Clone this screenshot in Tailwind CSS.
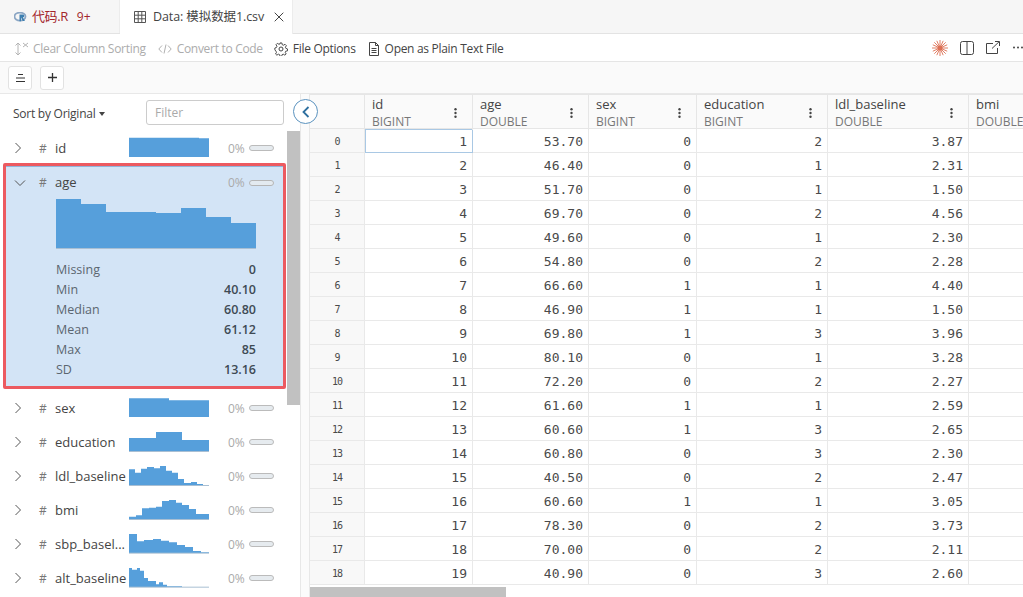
<!DOCTYPE html>
<html><head><meta charset="utf-8"><script src="https://cdn.jsdelivr.net/npm/@tailwindcss/browser@4"></script></head>
<body class="w-[1023px] h-[597px] overflow-hidden bg-white font-['Open_Sans','Noto_Sans_CJK_SC',sans-serif] text-[12px] text-[#444]">
<div class="h-[34px] flex bg-[#f6f6f6] border-b border-[#e3e3e3]">
  <div class="w-[120px] h-[33px] flex items-center pl-[14px] border-r border-[#ececec]">
    <svg width="13" height="10" viewBox="0 0 13 10" class="mr-[5px]"><ellipse cx="6" cy="4.6" rx="5.5" ry="4" fill="none" stroke="#8ba6c4" stroke-width="1.8"/><path d="M5.5 2.6h3.4a1.3 1.3 0 0 1 0 2.8l2 3.6H8.8L7 5.600v3.600H5.500z" fill="#3d7fb0"/></svg>
    <span class="text-[13px] text-[#a3262c] tracking-[-0.4px]">代码.R</span><span class="ml-[9px] text-[12px] text-[#a3262c]">9+</span>
  </div>
  <div class="w-[173px] h-[34px] bg-white flex items-center pl-[14px] text-[#444] border-r border-[#ececec]">
    <svg width="12" height="12" viewBox="0 0 12 12" fill="none" stroke="#555" class="mr-[7px]"><path d="M.5.5h11v11H.5zM.5 4.2h11M.5 7.8h11M4.2.5v11M7.8.5v11"/></svg>
    <span class="text-[12.5px] tracking-[-0.1px] whitespace-nowrap">Data: 模拟数据1.csv</span>
    <svg width="10" height="10" viewBox="0 0 10 10" class="ml-[10px]" stroke="#444" fill="none"><path d="M.7.7l8.6 8.6M9.3.7L.7 9.3"/></svg>
  </div>
</div>
<div class="h-[28px] flex items-center bg-white border-b border-[#e5e5e5] pl-[14px] pt-[2px] whitespace-nowrap">
  <svg width="16" height="14" viewBox="0 0 16 14" fill="none" stroke="#b4b4b4" class="mr-[3px]"><path d="M4 1v12M1.500 3.500L4 1l2.500 2.500M1.500 10.500L4 13l2.500-2.500M9 1l5 4M14 1L9 5"/></svg>
  <span class="text-[#acacac] tracking-[-0.3px]">Clear Column Sorting</span>
  <svg width="14" height="10" viewBox="0 0 14 10" fill="none" stroke="#b0b0b0" class="ml-[12px] mr-[5px]"><path d="M4 1.500L.8 5 4 8.500M10 1.500L13.200 5 10 8.500M8 .5L6 9.500"/></svg>
  <span class="text-[#acacac] tracking-[-0.3px]">Convert to Code</span>
  <svg width="14" height="14" viewBox="0 0 14 14" fill="none" stroke="#444" class="ml-[11px] mr-[5px]"><circle cx="7" cy="7" r="2"/><path d="M6 .7h2l.4 1.900 1.200.5 1.700-1 1.400 1.400-1 1.700.5 1.200 1.700.6v2l-1.900.4-.5 1.200 1 1.700-1.400 1.200-1.700-1-1.200.5-.4 1.800H6l-.4-1.800-1.200-.5-1.700 1-1.400-1.200 1-1.700-.5-1.200L.6 8V6l1.700-.6.5-1.200-1-1.700 1.400-1.400 1.700 1 1.200-.5z" transform="translate(.3 .3) scale(.95)"/></svg>
  <span class="text-[#444] tracking-[-0.3px]">File Options</span>
  <svg width="12" height="14" viewBox="0 0 12 14" fill="none" stroke="#444" class="ml-[12px] mr-[5px]"><path d="M1.500.5h6l3 3v10h-9zM7.500.5v3h3M3.500 6.500h5M3.500 8.500h5M3.500 10.500h5"/></svg>
  <span class="text-[#444] tracking-[-0.3px]">Open as Plain Text File</span>
  <div class="ml-auto flex items-center -translate-y-px">
    <svg width="16" height="16" viewBox="0 0 16 16" stroke="#dc7054" stroke-width=".9" class="mr-[12px]"><path d="M8 0v16M0 8h16M2.300 2.300l11.400 11.400M13.700 2.300L2.300 13.700M4.800 .8l6.400 14.400M11.200 .8l-6.400 14.400M.8 4.800l14.400 6.400M15.200 4.800L.8 11.200"/><circle cx="8" cy="8" r="2.500" fill="#dc7054" stroke="none"/></svg>
    <svg width="14" height="14" viewBox="0 0 14 14" fill="none" stroke="#444" class="mr-[12px]"><rect x=".5" y=".5" width="13" height="13" rx="2"/><path d="M7 .5v13"/></svg>
    <svg width="14" height="13" viewBox="0 0 14 13" fill="none" stroke="#444" class="mr-[13px]"><path d="M7 2.500H.5v10h11V7M6 7.500L13 .8M9 .5h4.500V5"/></svg>
    <svg width="10" height="3" viewBox="0 0 10 3" fill="#444"><circle cx="1" cy="1.500" r="1"/><circle cx="5" cy="1.500" r="1"/><circle cx="9" cy="1.500" r="1"/></svg>
  </div>
</div>
<div class="h-[32px] flex items-center gap-2 pl-2 bg-[#fafafa] border-b border-[#e8e8e8]">
  <div class="w-6 h-6 bg-white rounded-[3px] border border-[#e2e2e2] flex items-center justify-center"><svg width="11" height="10" viewBox="0 0 11 10" stroke="#333" fill="none"><path d="M3 1.500h5M1 5h9M1 8.500h9"/></svg></div>
  <div class="w-6 h-6 bg-white rounded-[3px] border border-[#e2e2e2] flex items-center justify-center"><svg width="9" height="9" viewBox="0 0 9 9" stroke="#333" stroke-width="1.300" fill="none"><path d="M4.500 0v9M0 4.500h9"/></svg></div>
</div>
<div class="flex h-[503px]">
  <div class="w-[301px] shrink-0 border-r border-[#e8e8e8] flex flex-col">
    <div class="h-[37px] flex items-center pl-[13px] pt-[2px] relative">
      <span class="tracking-[-0.25px] text-[#444]">Sort by Original</span>
      <svg width="6" height="4" viewBox="0 0 6 4" fill="#444" class="ml-[4px]"><path d="M0 0h6L3 4z"/></svg>
      <div class="absolute left-[146px] top-[6px] w-[138px] h-[25px] rounded-[3px] border border-[#ccc] pl-[8px] pt-px flex items-center text-[#aaa]">Filter</div>
    </div>
    <div class="flex flex-1 min-h-0">
      <div class="w-[287px] shrink-0 overflow-hidden">
        <div class="h-[32px] flex items-center pl-[14px] pt-[2px] [&_span:not(:last-child)]:relative [&_span:not(:last-child)]:top-px">
          <svg width="8" height="12" viewBox="0 0 8 12" fill="none" stroke="#555" class="mr-[17px]"><path d="M1.500 1l5 5-5 5"/></svg><span class="w-[16px] text-[#777]">#</span><span class="w-[74px] text-[13px] text-[#444] font-medium">id</span>
          <svg width="80" height="20" viewBox="387 38 240 60" class="shrink-0 -translate-y-px"><path d="M387 98V40H597V42H627V98Z" fill="#569fdb"/></svg>
          <span class="ml-[19px] w-[21px] text-[#aaa]">0%</span><span class="w-[25px] h-[6px] rounded-full bg-[#e6ebef] border border-[#bbb]"></span>
        </div>
        <div class="h-[226px] w-[283px] ml-[3px] border-[3px] border-[#ec5a60] rounded-[2px] bg-[#d3e4f6] relative">
          <div class="h-[33px] flex items-center pl-[8px] border-t border-[#8fb4da]">
            <svg width="12" height="8" viewBox="0 0 12 8" fill="none" stroke="#555" class="mr-[13px]"><path d="M1 1.500l5 5 5-5"/></svg><span class="w-[16px] text-[#777]">#</span><span class="text-[13px] text-[#444] font-medium">age</span>
            <span class="ml-auto w-[21px] text-[#aaa]">0%</span><span class="w-[25px] h-[6px] rounded-full bg-[#e3eaf0] border border-[#b5b5b5] mr-[9px]"></span>
          </div>
          <svg width="200" height="50" viewBox="56 199 200 50" class="ml-[50px]"><path d="M56 248V199H81V204H106V212H156V213H181V208H206V217H231V223H256V248Z" fill="#569fdb"/><rect x="56" y="248" width="200" height="1" fill="#a9bfd3"/></svg>
          <div class="mt-[11px] ml-[50px] w-[200px] text-[12.5px] text-[#5b6670] [&>div]:h-5 [&>div]:flex [&>div]:items-center [&>div]:justify-between [&_b]:font-semibold [&_b]:text-[#3e4a54]">
            <div><span>Missing</span><b>0</b></div>
            <div><span>Min</span><b>40.10</b></div>
            <div><span>Median</span><b>60.80</b></div>
            <div><span>Mean</span><b>61.12</b></div>
            <div><span>Max</span><b>85</b></div>
            <div><span>SD</span><b>13.16</b></div>
          </div>
        </div>
        <div class="h-[2px]"></div>
        <div class="[&>div]:h-[34px] [&>div]:flex [&>div]:items-center [&>div]:pl-[14px] [&_span:not(:last-child)]:relative [&_span:not(:last-child)]:top-px">
          <div><svg width="8" height="12" viewBox="0 0 8 12" fill="none" stroke="#555" class="mr-[17px]"><path d="M1.500 1l5 5-5 5"/></svg><span class="w-[16px] text-[#777]">#</span><span class="w-[74px] text-[13px] font-medium">sex</span><svg width="80" height="20" viewBox="387 383 240 60" class="shrink-0"><path d="M387 440V384H507V390H627V440Z" fill="#569fdb"/></svg><span class="ml-[19px] w-[21px] text-[#aaa]">0%</span><span class="w-[25px] h-[6px] rounded-full bg-[#e6ebef] border border-[#bbb]"></span></div>
          <div><svg width="8" height="12" viewBox="0 0 8 12" fill="none" stroke="#555" class="mr-[17px]"><path d="M1.500 1l5 5-5 5"/></svg><span class="w-[16px] text-[#777]">#</span><span class="w-[74px] text-[13px] font-medium">education</span><svg width="80" height="20" viewBox="387 36 240 60" class="shrink-0"><path d="M387 93V54H468V36H546V60H627V93Z" fill="#569fdb"/><rect x="387" y="93" width="240" height="3" fill="#a9bfd3"/></svg><span class="ml-[19px] w-[21px] text-[#aaa]">0%</span><span class="w-[25px] h-[6px] rounded-full bg-[#e6ebef] border border-[#bbb]"></span></div>
          <div><svg width="8" height="12" viewBox="0 0 8 12" fill="none" stroke="#555" class="mr-[17px]"><path d="M1.500 1l5 5-5 5"/></svg><span class="w-[16px] text-[#777]">#</span><span class="w-[74px] text-[13px] font-medium whitespace-nowrap">ldl_baseline</span><svg width="80" height="20" viewBox="387 138 240 60" class="shrink-0"><path d="M387 195V148H405V158H423V146H441V141H462V145H480V138H498V152H516V158H534V177H552V189H573V186H591V192H609V195H627Z" fill="#569fdb"/><rect x="387" y="195" width="240" height="3" fill="#a9bfd3"/></svg><span class="ml-[19px] w-[21px] text-[#aaa]">0%</span><span class="w-[25px] h-[6px] rounded-full bg-[#e6ebef] border border-[#bbb]"></span></div>
          <div><svg width="8" height="12" viewBox="0 0 8 12" fill="none" stroke="#555" class="mr-[17px]"><path d="M1.500 1l5 5-5 5"/></svg><span class="w-[16px] text-[#777]">#</span><span class="w-[74px] text-[13px] font-medium">bmi</span><svg width="80" height="20" viewBox="387 240 240 60" class="shrink-0"><path d="M387 297V290H408V286H426V265H447V263H468V260H486V243H507V240H528V248H546V255H567V267H588V282H627V297Z" fill="#569fdb"/><rect x="387" y="297" width="240" height="3" fill="#a9bfd3"/></svg><span class="ml-[19px] w-[21px] text-[#aaa]">0%</span><span class="w-[25px] h-[6px] rounded-full bg-[#e6ebef] border border-[#bbb]"></span></div>
          <div><svg width="8" height="12" viewBox="0 0 8 12" fill="none" stroke="#555" class="mr-[17px]"><path d="M1.500 1l5 5-5 5"/></svg><span class="w-[16px] text-[#777]">#</span><span class="w-[74px] text-[13px] font-medium whitespace-nowrap">sbp_basel...</span><svg width="80" height="20" viewBox="387 342 240 60" class="shrink-0"><path d="M387 399V342H411V364H432V360H459V357H483V362H507V367H531V375H555V381H579V393H603V397H627V399Z" fill="#569fdb"/><rect x="387" y="398" width="240" height="3" fill="#a9bfd3"/></svg><span class="ml-[19px] w-[21px] text-[#aaa]">0%</span><span class="w-[25px] h-[6px] rounded-full bg-[#e6ebef] border border-[#bbb]"></span></div>
          <div><svg width="8" height="12" viewBox="0 0 8 12" fill="none" stroke="#555" class="mr-[17px]"><path d="M1.500 1l5 5-5 5"/></svg><span class="w-[16px] text-[#777]">#</span><span class="w-[74px] text-[13px] font-medium whitespace-nowrap">alt_baseline</span><svg width="80" height="20" viewBox="387 444 240 60" class="shrink-0"><path d="M387 501V444H396V449H411V444H420V452H432V474H444V483H468V493H477V487H489V494H501V499H546V501Z" fill="#569fdb"/><rect x="387" y="500" width="240" height="3" fill="#a9bfd3"/></svg><span class="ml-[19px] w-[21px] text-[#aaa]">0%</span><span class="w-[25px] h-[6px] rounded-full bg-[#e6ebef] border border-[#bbb]"></span></div>
        </div>
      </div>
      <div class="w-[13px] flex flex-col"><div class="h-[274px] bg-[#c1c1c1]"></div></div>
    </div>
  </div>
  <div class="w-[9px] shrink-0 bg-[#fbfbfb] border-r border-[#e8e8e8] relative z-10">
    <div class="absolute left-[-8px] top-[5px] w-[25px] h-[25px] rounded-full border border-[#5b93bf] bg-white flex items-center justify-center"><svg width="8" height="12" viewBox="0 0 8 12" fill="none" stroke="#2e6f9f" stroke-width="1.800"><path d="M6.500 1L1.500 6l5 5"/></svg></div>
  </div>
  <div class="flex-1 min-w-0 overflow-hidden relative">
    <div class="grid grid-cols-[55px_108px_116px_108px_131px_141px_60px] w-[719px] h-[35px] bg-[#fafafa] border-y border-[#e6e6e6] [&>div]:border-r [&>div]:border-[#e6e6e6] [&>div]:pl-[7px] [&>div]:relative [&>div]:leading-[17px] [&>div]:pt-px [&_b]:block [&_b]:text-[13px] [&_b]:font-medium [&_b]:text-[#444] [&_span]:text-[#777] [&_svg]:absolute [&_svg]:top-[13px] [&_svg]:right-[15px]">
      <div></div>
      <div><b>id</b><span>BIGINT</span><svg width="3" height="10" viewBox="0 0 3 10" fill="#444"><circle cx="1.500" cy="1.200" r="1.200"/><circle cx="1.500" cy="5" r="1.200"/><circle cx="1.500" cy="8.800" r="1.200"/></svg></div>
      <div><b>age</b><span>DOUBLE</span><svg width="3" height="10" viewBox="0 0 3 10" fill="#444"><circle cx="1.500" cy="1.200" r="1.200"/><circle cx="1.500" cy="5" r="1.200"/><circle cx="1.500" cy="8.800" r="1.200"/></svg></div>
      <div><b>sex</b><span>BIGINT</span><svg width="3" height="10" viewBox="0 0 3 10" fill="#444"><circle cx="1.500" cy="1.200" r="1.200"/><circle cx="1.500" cy="5" r="1.200"/><circle cx="1.500" cy="8.800" r="1.200"/></svg></div>
      <div><b>education</b><span>BIGINT</span><svg width="3" height="10" viewBox="0 0 3 10" fill="#444"><circle cx="1.500" cy="1.200" r="1.200"/><circle cx="1.500" cy="5" r="1.200"/><circle cx="1.500" cy="8.800" r="1.200"/></svg></div>
      <div><b>ldl_baseline</b><span>DOUBLE</span><svg width="3" height="10" viewBox="0 0 3 10" fill="#444"><circle cx="1.500" cy="1.200" r="1.200"/><circle cx="1.500" cy="5" r="1.200"/><circle cx="1.500" cy="8.800" r="1.200"/></svg></div>
      <div><b>bmi</b><span>DOUBLE</span></div>
    </div>
    <div class="grid grid-cols-[55px_108px_116px_108px_131px_141px_60px] w-[719px] font-['DejaVu_Sans_Mono',monospace] text-[13px] text-[#4a4a4a] [&>div]:h-6 [&>div]:leading-[25px] [&>div]:border-b [&>div]:border-r [&>div]:border-[#e9e9e9] [&>div]:text-right [&>div]:pr-[5px] [&>div:nth-child(7n+1)]:bg-[#f8f8f8] [&>div:nth-child(7n+1)]:text-center [&>div:nth-child(7n+1)]:pr-0 [&>div:nth-child(7n+1)]:text-[10px] [&>div:nth-child(7n+1)]:tracking-[-1px]">
      <div>0</div><div class="outline outline-[#a9c8e4] -outline-offset-1">1</div><div>53.70</div><div>0</div><div>2</div><div>3.87</div><div></div>
      <div>1</div><div>2</div><div>46.40</div><div>0</div><div>1</div><div>2.31</div><div></div>
      <div>2</div><div>3</div><div>51.70</div><div>0</div><div>1</div><div>1.50</div><div></div>
      <div>3</div><div>4</div><div>69.70</div><div>0</div><div>2</div><div>4.56</div><div></div>
      <div>4</div><div>5</div><div>49.60</div><div>0</div><div>1</div><div>2.30</div><div></div>
      <div>5</div><div>6</div><div>54.80</div><div>0</div><div>2</div><div>2.28</div><div></div>
      <div>6</div><div>7</div><div>66.60</div><div>1</div><div>1</div><div>4.40</div><div></div>
      <div>7</div><div>8</div><div>46.90</div><div>1</div><div>1</div><div>1.50</div><div></div>
      <div>8</div><div>9</div><div>69.80</div><div>1</div><div>3</div><div>3.96</div><div></div>
      <div>9</div><div>10</div><div>80.10</div><div>0</div><div>1</div><div>3.28</div><div></div>
      <div>10</div><div>11</div><div>72.20</div><div>0</div><div>2</div><div>2.27</div><div></div>
      <div>11</div><div>12</div><div>61.60</div><div>1</div><div>1</div><div>2.59</div><div></div>
      <div>12</div><div>13</div><div>60.60</div><div>1</div><div>3</div><div>2.65</div><div></div>
      <div>13</div><div>14</div><div>60.80</div><div>0</div><div>3</div><div>2.30</div><div></div>
      <div>14</div><div>15</div><div>40.50</div><div>0</div><div>2</div><div>2.47</div><div></div>
      <div>15</div><div>16</div><div>60.60</div><div>1</div><div>1</div><div>3.05</div><div></div>
      <div>16</div><div>17</div><div>78.30</div><div>0</div><div>2</div><div>3.73</div><div></div>
      <div>17</div><div>18</div><div>70.00</div><div>0</div><div>2</div><div>2.11</div><div></div>
      <div>18</div><div>19</div><div>40.90</div><div>0</div><div>3</div><div>2.60</div><div></div>
    </div>
    <div class="absolute left-0 bottom-0 w-[196px] h-[10px] bg-[#c1c1c1]"></div>
  </div>
</div>
</body></html>
